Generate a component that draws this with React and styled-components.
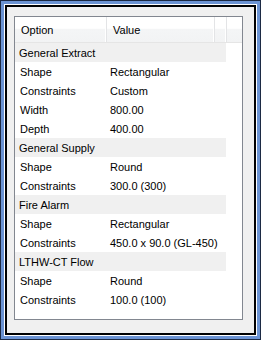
import React from 'react';
import styled, { createGlobalStyle } from 'styled-components';

const GlobalStyle = createGlobalStyle`
  html, body {
    margin: 0;
    padding: 0;
    background: #f0f0f0;
  }
  body {
    font-family: "Liberation Sans", Arial, sans-serif;
  }
`;

const groups = [
  {
    name: 'General Extract',
    rows: [
      ['Shape', 'Rectangular'],
      ['Constraints', 'Custom'],
      ['Width', '800.00'],
      ['Depth', '400.00'],
    ],
  },
  {
    name: 'General Supply',
    rows: [
      ['Shape', 'Round'],
      ['Constraints', '300.0 (300)'],
    ],
  },
  {
    name: 'Fire Alarm',
    rows: [
      ['Shape', 'Rectangular'],
      ['Constraints', '450.0 x 90.0 (GL-450)'],
    ],
  },
  {
    name: 'LTHW-CT Flow',
    rows: [
      ['Shape', 'Round'],
      ['Constraints', '100.0 (100)'],
    ],
  },
];

// window frame: dark edge, blue band, white + black inner lines
const Frame = styled.div`
  width: 261px;
  height: 340px;
  box-sizing: border-box;
  border: 1px solid #1c2a44;
  background: #6b93d3;
  padding: 3px;
`;

const FrameInner = styled.div`
  height: 100%;
  box-sizing: border-box;
  border-top: 1px solid #ffffff;
  border-left: 1px solid #ffffff;
  border-right: 1px solid #ffffff;
  border-bottom: 1px solid #ffffff;
`;

const Body = styled.div`
  height: 100%;
  box-sizing: border-box;
  border: 2px solid #000000;
  background: #f0f0f0;
  padding: 9px 11px 13px 7px;
`;

const ListBox = styled.div`
  height: 100%;
  box-sizing: border-box;
  border: 1px solid #828790;
  background: #ffffff;
  font-size: 11px;
  color: #000;
`;

const Header = styled.div`
  display: flex;
  height: 25px;
  border-bottom: 1px solid #e5e5e5;
  background: linear-gradient(#ffffff 0%, #ffffff 45%, #f4f5f6 50%, #f2f3f4 100%);
`;

const HeadCell = styled.div`
  width: ${p => p.$w}px;
  flex: ${p => (p.$fill ? 1 : 'none')};
  box-sizing: border-box;
  display: flex;
  align-items: center;
  padding-left: 6px;
  border-right: ${p => (p.$fill ? 'none' : '1px solid #e3e4e6')};
  box-shadow: ${p => (p.$fill ? 'none' : 'inset -1px 0 0 #ffffff')};
`;

const GroupRow = styled.div`
  width: 211px;
  height: 19px;
  box-sizing: border-box;
  padding-left: 4px;
  display: flex;
  align-items: center;
  background: #f0f0f0;
`;

const Row = styled.div`
  display: flex;
  height: 19px;
  align-items: center;
`;

const Cell = styled.div`
  width: ${p => p.$w}px;
  box-sizing: border-box;
  padding-left: ${p => p.$pad}px;
  white-space: nowrap;
`;

export default function App() {
  return (
    <>
      <GlobalStyle />
      <Frame>
        <FrameInner>
          <Body>
            <ListBox>
              <Header>
                <HeadCell $w={92}>Option</HeadCell>
                <HeadCell $w={108}>Value</HeadCell>
                <HeadCell $w={12} />
                <HeadCell $fill />
              </Header>
              {groups.map(g => (
                <React.Fragment key={g.name}>
                  <GroupRow>{g.name}</GroupRow>
                  {g.rows.map(([opt, val], i) => (
                    <Row key={i}>
                      <Cell $w={92} $pad={5}>{opt}</Cell>
                      <Cell $w={108} $pad={3}>{val}</Cell>
                    </Row>
                  ))}
                </React.Fragment>
              ))}
            </ListBox>
          </Body>
        </FrameInner>
      </Frame>
    </>
  );
}
